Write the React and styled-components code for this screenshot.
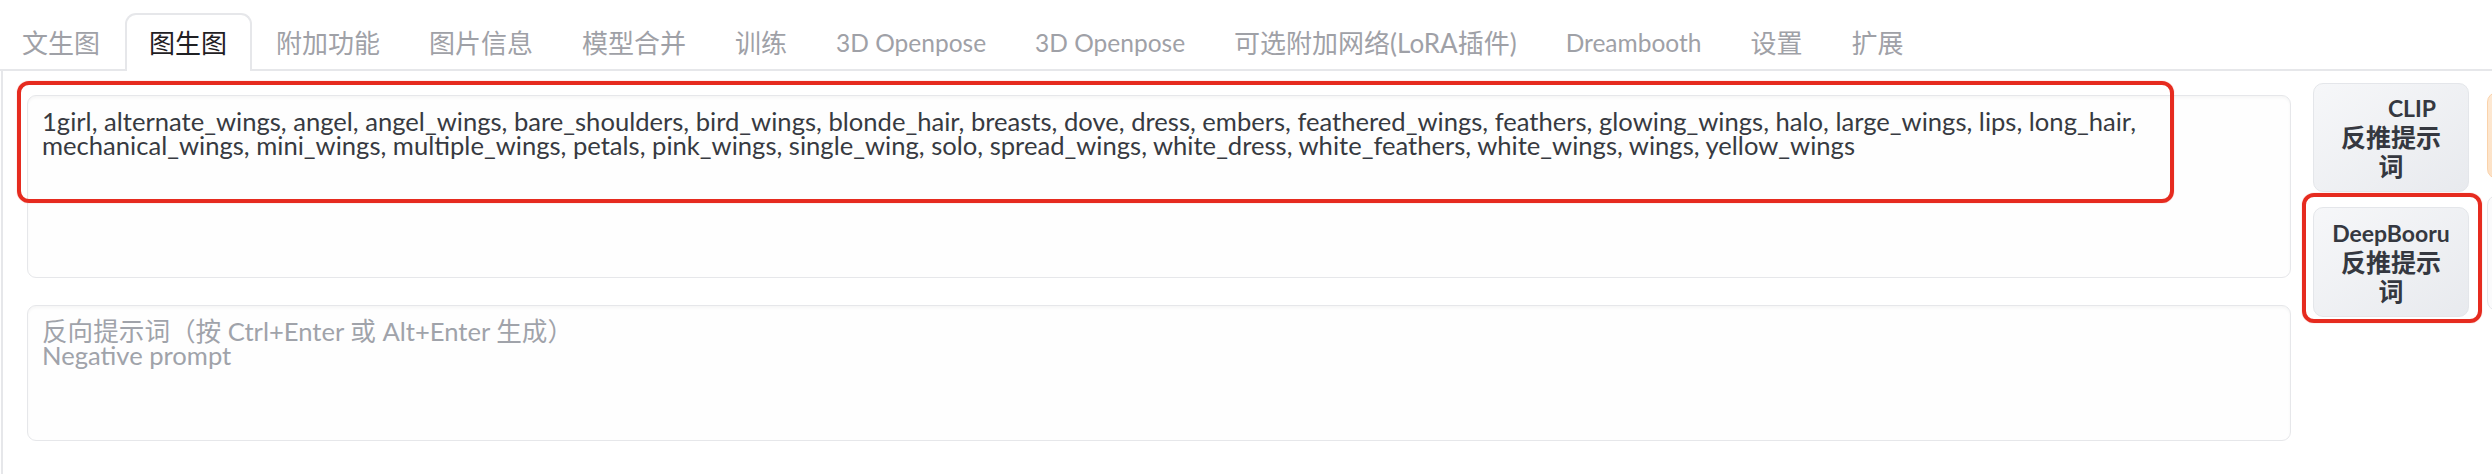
import React from 'react';
import styled, { createGlobalStyle } from 'styled-components';

const GlobalStyle = createGlobalStyle`
  html, body {
    margin: 0;
    padding: 0;
    background: #ffffff;
    overflow: hidden;
  }
  body {
    font-family: Lato, "Noto Sans CJK SC", sans-serif;
  }
`;

const TABS = [
  { name: '文生图' },
  { name: '图生图' },
  { name: '附加功能' },
  { name: '图片信息' },
  { name: '模型合并' },
  { name: '训练' },
  { name: '3D Openpose', latin: true },
  { name: '3D Openpose', latin: true },
  { name: '可选附加网络(LoRA插件)' },
  { name: 'Dreambooth', latin: true },
  { name: '设置' },
  { name: '扩展' },
];

const PROMPT =
  '1girl, alternate_wings, angel, angel_wings, bare_shoulders, bird_wings, blonde_hair, breasts, dove, dress, embers, feathered_wings, feathers, glowing_wings, halo, large_wings, lips, long_hair, mechanical_wings, mini_wings, multiple_wings, petals, pink_wings, single_wing, solo, spread_wings, white_dress, white_feathers, white_wings, wings, yellow_wings';

const App = () => {
  return (
    <Page>
      <GlobalStyle />
      <TabList>
        {TABS.map((tab, i) => (
          <Tab key={i} $active={i === 1} $latin={tab.latin}>
            {tab.name}
          </Tab>
        ))}
      </TabList>
      <Panel>
        <Row>
          <PromptColumn>
            <Marked>
              <PromptBox readOnly rows={2} defaultValue={PROMPT} $height={183} />
              <Highlight $inset="-14px auto auto -10px" $w="2157px" $h="122px" />
            </Marked>
            <PromptBox
              readOnly
              rows={2}
              $height={136}
              placeholder={'反向提示词（按 Ctrl+Enter 或 Alt+Enter 生成）\nNegative prompt'}
            />
          </PromptColumn>
          <ButtonColumn>
            <InterrogateButton $height={109}>
              <Line $indent={42}>CLIP</Line>
              <Line $cjk>反推提示</Line>
              <Line $cjk>词</Line>
            </InterrogateButton>
            <Marked>
              <InterrogateButton $height={110}>
                <Line>DeepBooru</Line>
                <Line $cjk>反推提示</Line>
                <Line $cjk>词</Line>
              </InterrogateButton>
              <Highlight $inset="-14px -13px -6px -11px" />
            </Marked>
          </ButtonColumn>
          <NextColumn>
            <GenerateStub />
            <ToolStub />
          </NextColumn>
        </Row>
      </Panel>
    </Page>
  );
};

export default App;

const Page = styled.div`
  width: 2492px;
  height: 474px;
  overflow: hidden;
  padding-top: 13px;
  box-sizing: border-box;
`;

const TabList = styled.div`
  display: flex;
  align-items: flex-end;
  border-bottom: 2px solid #e6e7ea;
  height: 56px;
`;

const Tab = styled.div`
  flex: none;
  box-sizing: border-box;
  padding: 2px 22.5px 0;
  border: 2px solid ${({ $active }) => ($active ? '#e6e7ea' : 'transparent')};
  border-bottom: none;
  border-radius: 11px 11px 0 0;
  background: ${({ $active }) => ($active ? '#ffffff' : 'transparent')};
  margin-bottom: ${({ $active }) => ($active ? '-2px' : '0')};
  height: ${({ $active }) => ($active ? '58px' : '56px')};
  line-height: 52px;
  font-size: ${({ $latin }) => ($latin ? '24.5px' : '26px')};
  white-space: nowrap;
  color: ${({ $active }) => ($active ? '#1f2023' : '#9fa1a7')};
  &:first-child {
    margin-left: -2.5px;
  }
`;

const Panel = styled.div`
  margin-left: 1px;
  border-left: 2px solid #e6e7ea;
  padding: 12px 0 0 24px;
  height: 420px;
  box-sizing: border-box;
`;

const Row = styled.div`
  display: flex;
  align-items: flex-start;
`;

const PromptColumn = styled.div`
  flex: none;
  width: 2264px;
  padding-top: 12px;
  display: flex;
  flex-direction: column;
  gap: 27px;
`;

const Marked = styled.div`
  position: relative;
  display: flex;
  flex-direction: column;
`;

const PromptBox = styled.textarea`
  display: block;
  width: 100%;
  height: ${({ $height }) => $height}px;
  box-sizing: border-box;
  margin: 0;
  padding: 13px 14px;
  border: 1px solid #e6e7ea;
  border-radius: 9px;
  background: #fefefe;
  box-shadow: inset 0 2px 3px rgba(0, 0, 0, 0.035);
  font-family: Lato, "Noto Sans CJK SC", sans-serif;
  font-size: 25.6px;
  line-height: 24px;
  color: #373a41;
  resize: none;
  overflow: hidden;
  outline: none;
  &::placeholder {
    color: #a0a3aa;
    opacity: 1;
  }
`;

const Highlight = styled.div`
  position: absolute;
  inset: ${({ $inset }) => $inset};
  width: ${({ $w }) => $w || 'auto'};
  height: ${({ $h }) => $h || 'auto'};
  box-sizing: border-box;
  border: 4px solid #e62b1f;
  border-radius: 12px;
  box-shadow: 0 0 1px rgba(230, 43, 31, 0.6);
  pointer-events: none;
`;

const ButtonColumn = styled.div`
  flex: none;
  width: 156px;
  margin: 0 18px 0 22px;
  display: flex;
  flex-direction: column;
  gap: 15px;
`;

const InterrogateButton = styled.button`
  display: flex;
  flex-direction: column;
  align-items: center;
  justify-content: center;
  width: 156px;
  height: ${({ $height }) => $height}px;
  box-sizing: border-box;
  padding: 0 8px;
  border: 1px solid #e4e6ea;
  border-radius: 10px;
  background: linear-gradient(to bottom right, #f6f7f9, #e8eaee);
  font-family: Lato, "Noto Sans CJK SC", sans-serif;
  font-weight: 700;
  font-size: 23px;
  color: #353840;
`;

const Line = styled.span`
  display: block;
  line-height: 29px;
  font-size: ${({ $cjk }) => ($cjk ? '25px' : '23px')};
  padding-left: ${({ $indent }) => $indent || 0}px;
  white-space: nowrap;
`;

const NextColumn = styled.div`
  flex: none;
  width: 200px;
  display: flex;
  flex-direction: column;
  gap: 16px;
  padding-top: 9px;
`;

const GenerateStub = styled.div`
  height: 85px;
  border: 1px solid #fbd2aa;
  border-radius: 10px;
  background: linear-gradient(to bottom right, #fde9d4, #fcd9b6);
`;

const ToolStub = styled.div`
  height: 114px;
  border: 1px solid #e6e7ea;
  border-radius: 10px;
  background: #fbfbfc;
`;
